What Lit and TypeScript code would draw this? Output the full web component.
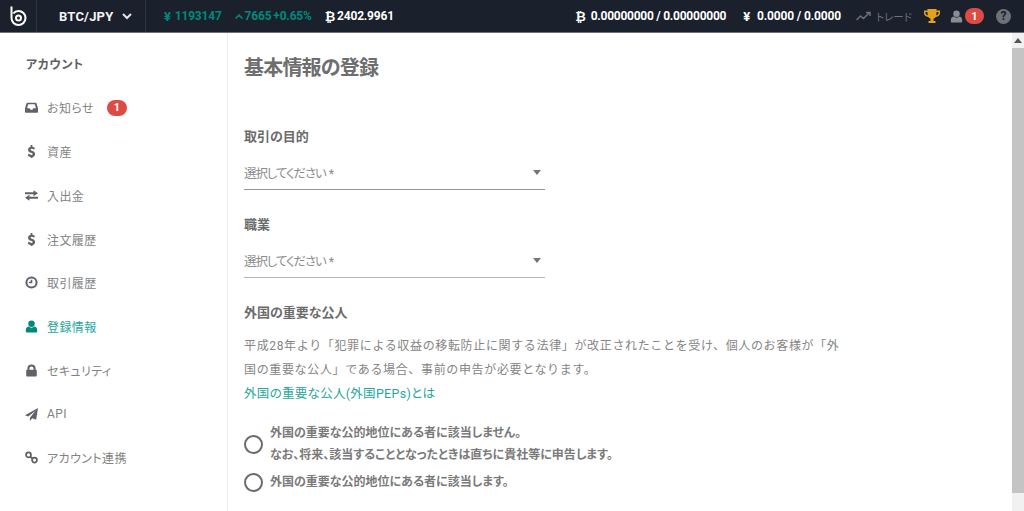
import { LitElement, html, css, svg } from "lit";
import { customElement } from "lit/decorators.js";

const icons: Record<string, any> = {
  inbox: svg`<path fill-rule="evenodd" d="M3 2h10c.5 0 .9.300 1.100.700L16 9v4.500c0 .6-.4 1-1 1H1c-.6 0-1-.4-1-1V9l1.900-6.300C2.100 2.300 2.500 2 3 2zm1 2L2.500 9h3.300l1 1.800h2.400l1-1.800h3.300L12 4z"/>`,
  dollar: svg`<g transform="translate(1.400 0) scale(.83 1)"><path d="M6.700 0h2.600v2c1.500.2 2.800.8 3.800 1.500l-1.300 2.400c-1.100-.8-2.500-1.300-3.700-1.300-1 0-1.600.4-1.600 1 0 .7.900 1 2.200 1.400 2.100.7 4.600 1.400 4.600 4.200 0 2-1.400 3.300-3.900 3.700v1.800H6.700v-1.800c-1.700-.3-3.300-1-4.300-2l1.500-2.300c1.100 1 2.600 1.600 3.900 1.600 1.100 0 1.800-.4 1.800-1.100 0-.8-1-1.100-2.300-1.500C5 9 2.900 8.200 2.900 5.700c0-1.900 1.400-3.200 3.800-3.600z"/></g>`,
  exchange: svg`<path d="M0 4h10.500V1.500L16 5.300 10.500 9V6.500H0z M16 9.500H5.500V7L0 10.800l5.500 3.700V12H16z"/>`,
  clock: svg`<path fill-rule="evenodd" d="M8 .5a7.500 7.500 0 1 1 0 15 7.500 7.500 0 0 1 0-15zm0 2.500a5 5 0 1 0 0 10 5 5 0 0 0 0-10zM7 4.500h2V9H4.800V7.200H7z"/>`,
  user: svg`<path d="M8 .5a4 4 0 1 1 0 8 4 4 0 0 1 0-8zM4.300 8c1 .9 2.300 1.400 3.700 1.400s2.700-.5 3.700-1.400c2.100.3 3.300 2 3.300 4.800v1.200c0 .8-.7 1.500-1.500 1.500h-11c-.8 0-1.500-.7-1.500-1.500v-1.200C1 10 2.200 8.300 4.300 8z"/>`,
  lock: svg`<path fill-rule="evenodd" d="M8 .5a5 5 0 0 1 5 5V7h.5c.6 0 1 .4 1 1v6.500c0 .6-.4 1-1 1h-11c-.6 0-1-.4-1-1V8c0-.6.4-1 1-1H3V5.500a5 5 0 0 1 5-5zm0 2.500a2.500 2.500 0 0 0-2.500 2.500V7h5V5.500A2.500 2.500 0 0 0 8 3z"/>`,
  plane: svg`<path fill-rule="evenodd" d="M16 0 13.700 14.500 8.800 12.500 6 16v-4l7-8.500L4 10.500 0 9z"/>`,
  link: svg`<path fill="none" stroke-width="2.200" d="M4.300 1.800a3 3 0 1 0 0 6 3 3 0 0 0 0-6zM11.700 8.200a3 3 0 1 0 0 6 3 3 0 0 0 0-6zM5.800 6.500l4.400 3.400"/>`,
};

const nav = [
  { i: "inbox", t: "お知らせ", badge: true },
  { i: "dollar", t: "資産" },
  { i: "exchange", t: "入出金" },
  { i: "dollar", t: "注文履歴" },
  { i: "clock", t: "取引履歴" },
  { i: "user", t: "登録情報", active: true },
  { i: "lock", t: "セキュリティ" },
  { i: "plane", t: "API" },
  { i: "link", t: "アカウント連携" },
];

@customElement("app-root")
export class AppRoot extends LitElement {
  static styles = css`
    :host {
      display: block;
      width: 1024px;
      height: 511px;
      overflow: hidden;
      background: #fff;
      font-family: Roboto, "Noto Sans CJK JP", sans-serif;
      color: #757575;
      font-feature-settings: "palt";
    }
    .top {
      height: 32px;
      background: #1a202c;
      border-bottom: 1px solid #6b7078;
      display: flex;
      align-items: center;
      color: #fff;
      font-size: 12px;
      font-weight: 700;
      white-space: nowrap;
    }
    .logo {
      width: 37px;
      height: 32px;
      border-right: 1px solid #2e3440;
      display: flex;
      align-items: center;
      justify-content: center;
      box-sizing: border-box;
    }
    .pair {
      width: 109px;
      height: 32px;
      border-right: 1px solid #2e3440;
      display: flex;
      align-items: center;
      gap: 9px;
      padding-left: 22px;
      box-sizing: border-box;
      font-size: 13px;
      letter-spacing: 0.2px;
      color: #f4f4f4;
    }
    .ticker {
      display: flex;
      align-items: center;
      margin-left: 18px;
      flex: 1;
      letter-spacing: -0.2px;
    }
    .green { color: #00897b; }
    .yen { margin-right: 4px; font-size: 13px; }
    .up { margin: 0 2px 0 13px; display: flex; }
    .pct { margin-left: 2px; }
    .btc { margin: 0 2px 0 13px; font-size: 13px; }
    .wallet { display: flex; align-items: center; }
    .w1 { margin-right: 17px; letter-spacing: -0.25px; }
    .w2 { margin-right: 15px; letter-spacing: -0.15px; }
    .w1 .wsym { margin-right: 5px; }
    .wsym { font-size: 13px; margin-right: 7px; }
    .trade {
      display: flex;
      align-items: center;
      gap: 5px;
      color: #6d7178;
      font-weight: 400;
      font-size: 10.500px;
      margin-right: 12px;
    }
    .trophy { margin-right: 10px; display: flex; }
    .uicon { display: flex; margin-right: 2px; color: #8a8e94; }
    .badge {
      background: #dd4b45;
      color: #fff;
      border-radius: 10px;
      font-size: 11px;
      font-weight: 700;
      display: flex;
      align-items: center;
      justify-content: center;
    }
    .badge.t { width: 19px; height: 16px; margin-right: 12px; }
    .help {
      width: 15px;
      height: 15px;
      border-radius: 50%;
      background: #6d7178;
      color: #1a202c;
      font-size: 12px;
      font-weight: 700;
      display: flex;
      align-items: center;
      justify-content: center;
      margin-right: 13px;
    }
    .page { display: flex; height: 478px; }
    .side {
      width: 228px;
      box-sizing: border-box;
      border-right: 1px solid #eee;
      padding: 25px 0 0 26px;
      flex: none;
    }
    .side h2 {
      margin: 0 0 13px;
      font-size: 12px;
      font-weight: 700;
      color: #616161;
      line-height: 15px;
      letter-spacing: 0.6px;
    }
    .item {
      height: 43.750px;
      display: flex;
      align-items: center;
      font-size: 12px;
      color: #828282;
      letter-spacing: 0.4px;
    }
    .item svg { width: 13px; height: 13px; fill: #5f6368; stroke: #5f6368; stroke-width: 0; margin: 0 9px 0 -1px; flex: none; }
    .item.active { color: #26a69a; }
    .item.active svg { fill: #00897b; }
    .item .badge { width: 20px; height: 16px; margin-left: 13px; letter-spacing: 0; }
    main {
      flex: 1;
      padding: 22px 0 0 16px;
      min-width: 0;
    }
    h1 {
      margin: 0 0 48px;
      font-size: 20px;
      line-height: 26px;
      font-weight: 700;
      color: #6e6e6e;
      letter-spacing: -0.8px;
    }
    .label {
      font-size: 13px;
      font-weight: 700;
      color: #6b6b6b;
      line-height: 16px;
    }
    .select {
      width: 301px;
      height: 29px;
      margin: 13px 0 27px;
      padding: 0 0 2px;
      border-bottom: 1px solid #949494;
      box-sizing: content-box;
      display: flex;
      align-items: center;
      justify-content: space-between;
      font-size: 12.500px;
      letter-spacing: -1.1px;
      word-spacing: 1px;
      color: #8c8c8c;
    }
    .select.b { border-bottom-color: #b5b5b5; }
    .select i {
      width: 0;
      height: 0;
      border: 4.500px solid transparent;
      border-top: 5px solid #757575;
      border-bottom: 0;
      margin-right: 4px;
    }
    .desc {
      width: 600px;
      margin: 13px 0 17px;
      font-size: 12px;
      line-height: 24px;
      color: #848484;
      letter-spacing: 0.65px;
      font-feature-settings: normal;
    }
    .link { display: block; line-height: 23px; color: #26a69a; letter-spacing: 0.3px; font-size: 12.500px; font-feature-settings: "palt"; }
    .radio {
      display: flex;
      align-items: center;
      gap: 7px;
      font-size: 12px;
      font-weight: 700;
      color: #7a7a7a;
      line-height: 22px;
      margin-bottom: 5px;
    }
    .radio b {
      width: 15px;
      height: 15px;
      border: 2px solid #6b6b6b;
      border-radius: 50%;
      flex: none;
    }
    .bar {
      width: 12px;
      flex: none;
      background: #f1f1f1;
      display: flex;
      flex-direction: column;
      align-items: center;
    }
    .bar span {
      height: 15px;
      display: flex;
      align-items: center;
    }
    .bar span::before {
      content: "";
      border: 4px solid transparent;
      border-bottom: 5px solid #555;
      border-top: 0;
    }
    .bar u { display: block; width: 100%; height: 445px; background: #c4c4c4; }
  `;

  render() {
    return html`
      <div class="top">
        <div class="logo">
          <svg width="18" height="22" viewBox="0 0 18 22" fill="none" stroke="#fff" stroke-width="2">
            <path d="M2.500 1.500V13a7 7 0 1 0 7-7c-2 0-4 .9-5.200 2.500"/>
            <circle cx="9.500" cy="13" r="2.500"/>
          </svg>
        </div>
        <div class="pair">
          BTC/JPY
          <svg width="10" height="7" viewBox="0 0 10 7" fill="none" stroke="#e4e4e4" stroke-width="2"><path d="M1 1l4 4 4-4"/></svg>
        </div>
        <div class="ticker">
          <span class="green yen">¥</span><span class="green">1193147</span>
          <span class="green up"><svg width="8" height="5" viewBox="0 0 8 5" fill="#00897b"><path d="M4 0l4 4-1 1-3-2.500L1 5 0 4z"/></svg></span><span class="green">7665</span><span class="green pct">+0.65%</span>
          <span class="btc">₿</span><span>2402.9961</span>
        </div>
        <div class="wallet w1"><span class="wsym">₿</span>0.00000000 / 0.00000000</div>
        <div class="wallet w2"><span class="wsym">¥</span>0.0000 / 0.0000</div>
        <div class="trade">
          <svg width="15" height="10" viewBox="0 0 15 10" fill="none" stroke="#6d7178" stroke-width="1.500"><path d="M0.500 9l4-4 3 2.500L13 2M10 1.500h4V5"/></svg>
          トレード
        </div>
        <div class="trophy">
          <svg width="16" height="15" viewBox="0 0 16 15" fill="#e3a21a"><path fill-rule="evenodd" d="M3.500 0h9v1.500H16V4c0 2-1.700 3.700-4.200 4-.6.900-1.400 1.500-2.300 1.800v2.200h2V14H4.500v-2h2V9.800c-.9-.3-1.700-.9-2.300-1.800C1.700 7.700 0 6 0 4V1.500h3.500zM1.500 3v1c0 1 .9 2 2.300 2.400-.2-1-.3-2.200-.3-3.400zm13 0h-2c0 1.200-.1 2.400-.3 3.400 1.400-.4 2.300-1.400 2.300-2.400z"/></svg>
        </div>
        <div class="uicon">
          <svg width="13" height="13" viewBox="0 0 16 16" fill="currentColor">${icons.user}</svg>
        </div>
        <div class="badge t">1</div>
        <div class="help">?</div>
      </div>
      <div class="page">
        <div class="side">
          <h2>アカウント</h2>
          ${nav.map(
            (n) => html`
              <div class="item ${n.active ? "active" : ""}">
                <svg viewBox="0 0 16 16">${icons[n.i]}</svg>
                ${n.t}
                ${n.badge ? html`<span class="badge">1</span>` : ""}
              </div>
            `
          )}
        </div>
        <main>
          <h1>基本情報の登録</h1>
          <div class="label">取引の目的</div>
          <div class="select">選択してください *<i></i></div>
          <div class="label">職業</div>
          <div class="select b">選択してください *<i></i></div>
          <div class="label">外国の重要な公人</div>
          <div class="desc">
            平成28年より「犯罪による収益の移転防止に関する法律」が改正されたことを受け、個人のお客様が「外国の重要な公人」である場合、事前の申告が必要となります。
            <span class="link">外国の重要な公人(外国PEPs)とは</span>
          </div>
          <div class="radio"><b></b><span>外国の重要な公的地位にある者に該当しません。<br />なお、将来、該当することとなったときは直ちに貴社等に申告します。</span></div>
          <div class="radio"><b></b><span>外国の重要な公的地位にある者に該当します。</span></div>
        </main>
        <div class="bar"><span></span><u></u></div>
      </div>
    `;
  }
}
